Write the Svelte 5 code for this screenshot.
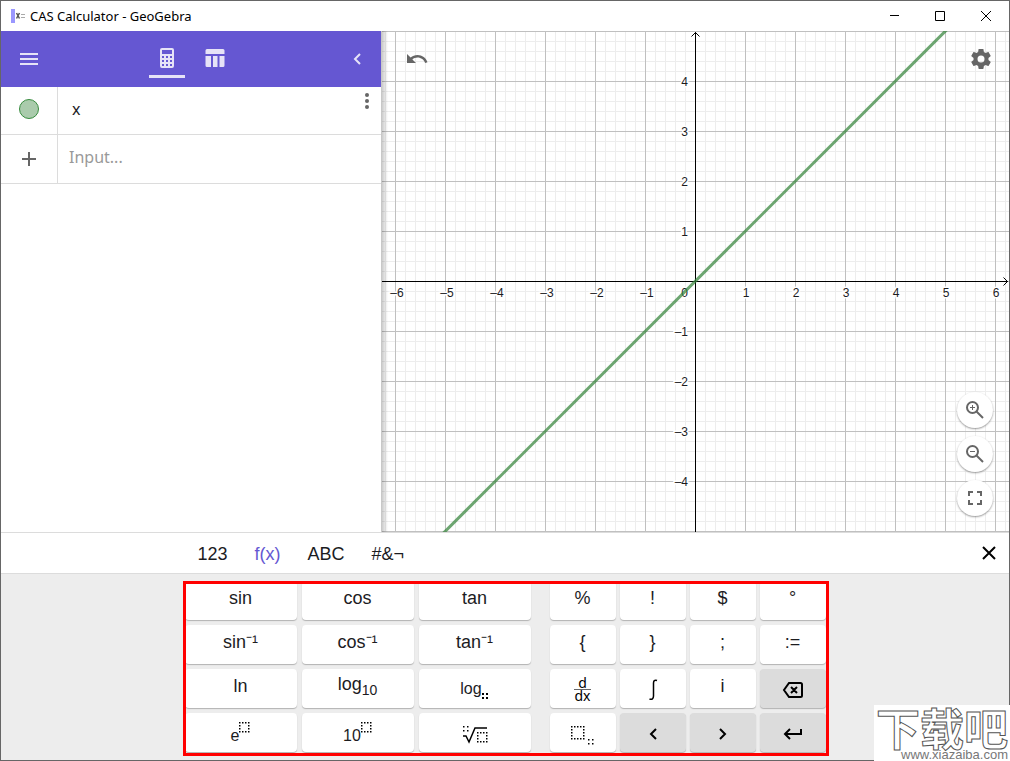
<script>
    import { onMount } from "svelte";

    const UNIT = 50;

    let width = 627;
    let height = 501;
    let expression = "x";
    let draft = "";
    let activeTab = "f(x)";

    const tabs = ["123", "f(x)", "ABC", "#&¬"];

    const functionKeys = [
        { label: "sin" },
        { label: "cos" },
        { label: "tan" },
        { label: "sin", sup: "⁻¹" },
        { label: "cos", sup: "⁻¹" },
        { label: "tan", sup: "⁻¹" },
        { label: "ln" },
        { label: "log", sub: "10" },
        { label: "log", boxSub: true },
        { label: "e", box: true },
        { label: "10", box: true },
        { icon: "root", name: "nth root" },
    ];

    const symbolKeys = [
        { label: "%" },
        { label: "!" },
        { label: "$" },
        { label: "°" },
        { label: "{" },
        { label: "}" },
        { label: ";" },
        { label: ":=" },
        { icon: "derivative", name: "derivative" },
        { icon: "integral", name: "integral" },
        { label: "i" },
        { icon: "backspace", name: "backspace", dark: true },
        { icon: "index", name: "subscript" },
        { icon: "left", name: "left", dark: true },
        { icon: "right", name: "right", dark: true },
        { icon: "enter", name: "enter", dark: true },
    ];

    // perimeter of a dotted placeholder box
    function dots(x, y, cols, rows, step) {
        const out = [];
        for (let r = 0; r < rows; r++) {
            for (let c = 0; c < cols; c++) {
                if (r === 0 || c === 0 || r === rows - 1 || c === cols - 1) {
                    out.push([x + c * step, y + r * step]);
                }
            }
        }
        return out;
    }

    function gridLines(origin, size, step) {
        const out = [];
        const first = Math.ceil(-origin / step);
        for (let i = first; origin + i * step <= size; i++) {
            out.push(origin + i * step + 0.5);
        }
        return out;
    }

    // leaves out the labels that would touch an edge
    function ticks(origin, size) {
        const out = [];
        for (let i = Math.ceil((10 - origin) / UNIT); origin + i * UNIT < size - 10; i++) {
            if (i !== 0) out.push(i);
        }
        return out;
    }

    const tickLabel = (n) => (n < 0 ? "–" + -n : String(n));

    $: cx = Math.floor(width / 2);
    $: cy = Math.floor(height / 2);
    $: reach = Math.max(cx, cy) + UNIT;

    onMount(() => {
        document.title = "CAS Calculator - GeoGebra";
    });
</script>

<div class="window">
    <header class="title-bar">
        <svg class="app-icon" width="16" height="16" viewBox="0 0 16 16">
            <rect x="2" y="1" width="4" height="14" fill="#9a97ff" />
            <path d="M7.500 5l3 5.500M10.500 5l-3 5.500" stroke="#555" stroke-width="1.500" />
            <path d="M12 6.500h4M12 9.500h4" stroke="#aaa" />
        </svg>
        <span class="title">CAS Calculator - GeoGebra</span>
        <div class="window-buttons">
            <button aria-label="Minimize"><svg width="12" height="12" viewBox="0 0 12 12"><path d="M2 5.500h9" /></svg></button>
            <button aria-label="Maximize"><svg width="12" height="12" viewBox="0 0 12 12"><path d="M1.500 1.500h9v9h-9z" /></svg></button>
            <button aria-label="Close"><svg width="12" height="12" viewBox="0 0 12 12"><path d="M1 1l10 10M11 1L1 11" /></svg></button>
        </div>
    </header>

    <main>
        <section class="algebra">
            <div class="toolbar">
                <button class="menu" aria-label="Menu">
                    <svg width="18" height="12" viewBox="0 0 18 12"><path d="M0 0h18v2H0zM0 5h18v2H0zM0 10h18v2H0z" /></svg>
                </button>
                <nav>
                    <button class="view active" aria-label="Algebra">
                        <svg width="20" height="20" viewBox="0 0 20 20"><path fill-rule="evenodd" d="M5 0h10a2 2 0 0 1 2 2v16a2 2 0 0 1-2 2H5a2 2 0 0 1-2-2V2a2 2 0 0 1 2-2zM5 2v4h10V2zM5 8v2h2V8zM9 8v2h2V8zM13 8v2h2V8zM5 12v2h2v-2zM9 12v2h2v-2zM13 12v2h2v-2zM5 16v2h2v-2zM9 16v2h2v-2zM13 16v2h2v-2z" /></svg>
                    </button>
                    <button class="view" aria-label="Table">
                        <svg width="20" height="20" viewBox="0 0 20 20"><path d="M2 1h16a1.500 1.500 0 0 1 1.500 1.500V6H.5V2.500A1.500 1.500 0 0 1 2 1zM.5 8H6v11H2a1.500 1.500 0 0 1-1.500-1.500zM8 8h4.500v11H8zM14.500 8h5v9.500A1.500 1.500 0 0 1 18 19h-3.500z" /></svg>
                    </button>
                </nav>
                <button class="collapse" aria-label="Collapse">
                    <svg width="8" height="12" viewBox="0 0 8 12"><path d="M7 1L2 6l5 5" fill="none" stroke="#e6e3f7" stroke-width="2" /></svg>
                </button>
            </div>

            <div class="row first">
                <div class="marker"><button class="dot" aria-label="Show or hide"></button></div>
                <input aria-label="Expression" class="expression" bind:value={expression} />
                <button class="more" aria-label="More">
                    <svg width="4" height="16" viewBox="0 0 4 16"><circle cx="2" cy="2" r="2" /><circle cx="2" cy="8" r="2" /><circle cx="2" cy="14" r="2" /></svg>
                </button>
            </div>
            <div class="row">
                <div class="marker">
                    <button aria-label="Add"><svg width="14" height="14" viewBox="0 0 14 14"><path d="M6 0h2v6h6v2H8v6H6V8H0V6h6z" /></svg></button>
                </div>
                <input aria-label="Input" placeholder="Input..." bind:value={draft} />
            </div>
        </section>

        <section class="graphics" bind:clientWidth={width} bind:clientHeight={height}>
            <svg class="plot" viewBox="0 0 {width} {height}">
                <g stroke="#ededed">
                    {#each gridLines(cx, width, 10) as x}<path d="M{x} 0V{height}" />{/each}
                    {#each gridLines(cy, height, 10) as y}<path d="M0 {y}H{width}" />{/each}
                </g>
                <g stroke="#c0c0c0">
                    {#each gridLines(cx, width, UNIT) as x}<path d="M{x} 0V{height}" />{/each}
                    {#each gridLines(cy, height, UNIT) as y}<path d="M0 {y}H{width}" />{/each}
                </g>
                <g class="axis">
                    <path d="M{cx + 0.5} 1V{height}M{cx - 3.5} 5.500l4 -4l4 4" />
                    <path d="M0 {cy + 0.5}H{width - 1}M{width - 5.5} {cy - 3.5}l4 4l-4 4" />
                </g>
                <g class="labels">
                    {#each ticks(cx, width + 10) as n}
                        <text x={cx + n * UNIT + (n < 0 ? 2 : 1)} y={cy + 16} text-anchor="middle">{tickLabel(n)}</text>
                    {/each}
                    {#each ticks(cy, height) as n}
                        <text x={cx - 7} y={cy + n * UNIT + 5} text-anchor="end">{tickLabel(-n)}</text>
                    {/each}
                    <text x={cx - 7} y={cy + 16} text-anchor="end">0</text>
                </g>
                <path class="curve" d="M{cx - reach} {cy + 0.5 + reach}L{cx + reach} {cy + 0.5 - reach}" />
            </svg>

            <button class="undo" aria-label="Undo">
                <svg width="24" height="24" viewBox="0 0 24 24"><path d="M12.500 8c-2.650 0-5.050.99-6.900 2.600L2 7v9h9l-3.620-3.620c1.390-1.160 3.160-1.880 5.120-1.880 3.540 0 6.550 2.310 7.600 5.500l2.370-.78C21.080 11.030 17.150 8 12.500 8z" /></svg>
            </button>
            <button class="settings" aria-label="Settings">
                <svg width="24" height="24" viewBox="0 0 24 24"><path fill-rule="evenodd" d="M19.430 12.980c.04-.32.07-.64.07-.98s-.03-.66-.07-.98l2.110-1.650c.19-.15.24-.42.12-.64l-2-3.460c-.12-.22-.39-.3-.61-.22l-2.490 1c-.52-.4-1.080-.73-1.690-.98l-.38-2.650C14.460 2.180 14.250 2 14 2h-4c-.25 0-.46.18-.49.42l-.38 2.650c-.61.25-1.170.59-1.690.98l-2.490-1c-.23-.09-.49 0-.61.22l-2 3.460c-.13.22-.07.49.12.64l2.110 1.650c-.04.32-.07.65-.07.98s.03.66.07.98l-2.110 1.650c-.19.15-.24.42-.12.64l2 3.460c.12.22.39.3.61.22l2.490-1c.52.4 1.080.73 1.690.98l.38 2.650c.03.24.24.42.49.42h4c.25 0 .46-.18.49-.42l.38-2.650c.61-.25 1.170-.59 1.690-.98l2.490 1c.23.09.49 0 .61-.22l2-3.460c.12-.22.07-.49-.12-.64zM12 15.500a3.500 3.500 0 1 1 0-7 3.500 3.500 0 0 1 0 7z" /></svg>
            </button>

            <div class="zoom-buttons">
                <button aria-label="Zoom in">
                    <svg width="20" height="20" viewBox="0 0 20 20"><g fill="none" stroke="#666" stroke-width="2"><circle cx="7.500" cy="7.500" r="5.500" /><path d="M11.500 11.500l6.500 6.500" /><path d="M5 7.500h5M7.500 5v5" stroke-width="1" /></g></svg>
                </button>
                <button aria-label="Zoom out">
                    <svg width="20" height="20" viewBox="0 0 20 20"><g fill="none" stroke="#666" stroke-width="2"><circle cx="7.500" cy="7.500" r="5.500" /><path d="M11.500 11.500l6.500 6.500" /><path d="M5 7.500h5" stroke-width="1" /></g></svg>
                </button>
                <button aria-label="Fullscreen">
                    <svg width="20" height="20" viewBox="0 0 20 20"><path d="M4 8V4h4M12 4h4v4M16 12v4h-4M8 16H4v-4" fill="none" stroke="#666" stroke-width="2" /></svg>
                </button>
            </div>
        </section>
    </main>

    <section class="keyboard">
        <div class="tab-bar">
            <div class="tabs">
                {#each tabs as tab}
                    <button class:selected={tab === activeTab} on:click={() => (activeTab = tab)}>{tab}</button>
                {/each}
            </div>
            <button class="close" aria-label="Close keyboard">
                <svg width="14" height="14" viewBox="0 0 14 14"><path d="M1 1l12 12M13 1L1 13" stroke="#000" stroke-width="2" /></svg>
            </button>
        </div>

        <div class="pad">
            <div class="keys">
                <div class="functions">
                    {#each functionKeys as key}
                        <button class="key" class:low={key.boxSub} class:lower={key.box} class:centered={key.icon} aria-label={key.name}>
                            {#if key.icon}
                                <svg width="26" height="20" viewBox="0 0 26 20">
                                    {#each [...dots(1, 2, 2, 2, 4), ...dots(15, 8, 4, 4, 3)] as [x, y]}
                                        <rect {x} {y} width="1.500" height="1.500" />
                                    {/each}
                                    <path d="M1 12h3l3 6L13 4h12" fill="none" stroke="#000" stroke-width="1.500" />
                                </svg>
                            {:else}
                                <span>{key.label}{#if key.sup}<span class="sup">{key.sup}</span>{/if}{#if key.sub}<sub>{key.sub}</sub>{/if}</span>
                                {#if key.box}
                                    <svg class="exponent" width="11" height="11" viewBox="0 0 11 11">
                                        {#each dots(0, 0, 4, 4, 3) as [x, y]}<rect {x} {y} width="1.500" height="1.500" />{/each}
                                    </svg>
                                {/if}
                                {#if key.boxSub}
                                    <svg class="base" width="7" height="7" viewBox="0 0 7 7">
                                        {#each dots(0, 0, 2, 2, 4) as [x, y]}<rect {x} {y} width="2" height="2" />{/each}
                                    </svg>
                                {/if}
                            {/if}
                        </button>
                    {/each}
                </div>
                <div class="symbols">
                    {#each symbolKeys as key}
                        <button class="key" class:dark={key.dark} class:centered={key.icon} aria-label={key.name}>
                            {#if key.icon === "derivative"}
                                <span class="fraction"><span>d</span><span>dx</span></span>
                            {:else if key.icon === "integral"}
                                <svg width="10" height="22" viewBox="0 0 10 22"><path d="M9 1.500C6.500.5 5.500 2 5.500 4v13c0 2.500-1.500 4-4 3" fill="none" stroke="#000" stroke-width="1.500" /></svg>
                            {:else if key.icon === "backspace"}
                                <svg width="22" height="18" viewBox="0 0 22 18"><path d="M7 2h11.500a1.500 1.500 0 0 1 1.500 1.500v11a1.500 1.500 0 0 1-1.500 1.500H7L2 9zM9 6l6 6M15 6l-6 6" fill="none" stroke="#000" stroke-width="2" /></svg>
                            {:else if key.icon === "index"}
                                <svg width="24" height="22" viewBox="0 0 24 22">
                                    {#each [...dots(0, 3, 5, 5, 3), ...dots(17, 16, 2, 2, 4)] as [x, y]}
                                        <rect {x} {y} width="1.500" height="1.500" />
                                    {/each}
                                </svg>
                            {:else if key.icon === "left"}
                                <svg width="8" height="12" viewBox="0 0 8 12"><path d="M7 1L2 6l5 5" fill="none" stroke="#000" stroke-width="2" /></svg>
                            {:else if key.icon === "right"}
                                <svg width="8" height="12" viewBox="0 0 8 12"><path d="M1 1l5 5-5 5" fill="none" stroke="#000" stroke-width="2" /></svg>
                            {:else if key.icon === "enter"}
                                <svg width="20" height="12" viewBox="0 0 20 12"><path d="M18 1v5H2M7 1L2 6l5 5" fill="none" stroke="#000" stroke-width="2" /></svg>
                            {:else}
                                <span>{key.label}</span>
                            {/if}
                        </button>
                    {/each}
                </div>
                <div class="highlight"></div>
            </div>
        </div>
    </section>

    <div class="watermark">
        <span class="brand">下载吧</span>
        <span class="site">www.xiazaiba.com</span>
    </div>
</div>

<style>
    :global(body) {
        margin: 0;
    }

    .window {
        position: relative;
        display: flex;
        flex-direction: column;
        box-sizing: border-box;
        min-height: 100vh;
        border: 1px solid #666;
        background: #fff;
        color: #1c1c1f;
        font-family: "Liberation Sans", Arial, sans-serif;
    }

    button {
        display: flex;
        align-items: center;
        justify-content: center;
        padding: 0;
        border: 0;
        background: none;
        color: inherit;
        font: inherit;
    }

    svg {
        display: block;
    }

    .title-bar {
        display: flex;
        align-items: center;
        height: 30px;
        padding-left: 8px;
    }

    .title {
        flex: 1;
        margin-left: 5px;
        color: #000;
        font: 13px/16px "Noto Sans", sans-serif;
    }

    .window-buttons {
        display: flex;
    }

    .window-buttons button {
        width: 46px;
        height: 28px;
    }

    .window-buttons path {
        fill: none;
        stroke: #000;
    }

    main {
        display: flex;
        flex: 1;
        min-height: 300px;
    }

    .algebra {
        flex: 0 0 380px;
        border-right: 1px solid #c8c8c8;
    }

    .toolbar {
        display: grid;
        grid-template-columns: 1fr auto 1fr;
        align-items: center;
        height: 56px;
        padding: 0 20px 0 19px;
        background: #6557d2;
        fill: #e6e3f7;
    }

    .menu {
        justify-self: start;
    }

    .collapse {
        justify-self: end;
    }

    nav {
        display: flex;
        gap: 12px;
    }

    .view {
        box-sizing: border-box;
        width: 36px;
        height: 38px;
        border-bottom: 3px solid transparent;
    }

    .view.active {
        border-bottom-color: #e6e3f7;
    }

    .row {
        display: flex;
        height: 48px;
        border-bottom: 1px solid #dcdcdc;
        fill: #666;
    }

    .row.first {
        height: 47px;
    }

    .marker {
        display: flex;
        align-items: center;
        justify-content: center;
        width: 56px;
        border-right: 1px solid #dcdcdc;
    }

    .first .marker {
        align-items: flex-start;
        padding-top: 12px;
        box-sizing: border-box;
        width: 57px;
    }

    .dot {
        box-sizing: border-box;
        width: 20px;
        height: 20px;
        border: 1px solid #388c3f;
        border-radius: 50%;
        background: #aacbac;
    }

    .row input {
        flex: 1;
        min-width: 0;
        padding: 0 11px 4px;
        border: 0;
        outline: 0;
        background: none;
        color: #1c1c1f;
        font: 16px/24px "Noto Sans", sans-serif;
    }

    .row input.expression {
        padding: 0 14px 4px;
    }

    .row input::placeholder {
        color: #999;
    }

    .more {
        align-self: flex-start;
        padding: 6px 12px;
    }

    .graphics {
        position: relative;
        flex: 1;
        min-width: 0;
        overflow: hidden;
    }

    .graphics::before {
        content: "";
        position: absolute;
        z-index: 1;
        inset: 0 auto 0 0;
        width: 6px;
        background: linear-gradient(to right, rgba(0, 0, 0, 0.2), rgba(0, 0, 0, 0));
    }

    .plot {
        position: absolute;
        inset: 0;
        width: 100%;
        height: 100%;
    }

    .axis path {
        fill: none;
        stroke: #000;
    }

    .labels text {
        fill: #1c1c1f;
        stroke: #fff;
        stroke-width: 3px;
        paint-order: stroke;
        font-size: 12px;
    }

    .curve {
        stroke: #35843a;
        stroke-opacity: 0.72;
        stroke-width: 3px;
    }

    .undo,
    .settings {
        position: absolute;
        top: 16px;
        fill: #666;
    }

    .undo {
        left: 23px;
    }

    .settings {
        right: 16px;
    }

    .zoom-buttons {
        position: absolute;
        right: 16px;
        bottom: 16px;
        display: grid;
        gap: 8px;
    }

    .zoom-buttons button {
        width: 36px;
        height: 36px;
        border-radius: 50%;
        background: #fff;
        box-shadow: 0 1px 2px rgba(0, 0, 0, 0.4);
    }

    .keyboard {
        background: #ededed;
    }

    .tab-bar {
        display: grid;
        grid-template-columns: 1fr minmax(0, 641px) 1fr;
        height: 40px;
        border: solid #dcdcdc;
        border-width: 1px 0;
        background: #fff;
    }

    .tabs {
        display: flex;
        gap: 1px;
        grid-column: 2;
    }

    .tabs button {
        padding: 2px 13px 0;
        font-size: 18px;
    }

    .tabs button.selected {
        color: #6557d2;
    }

    .close {
        justify-self: end;
        padding: 0 13px;
    }

    .pad {
        display: flex;
        justify-content: center;
        padding: 7px 0 8px;
    }

    .keys {
        position: relative;
        display: flex;
        gap: 19px;
    }

    .functions,
    .symbols {
        display: grid;
        grid-template-columns: repeat(3, 112px);
        gap: 5px;
    }

    .symbols {
        grid-template-columns: repeat(4, 66px);
        column-gap: 4px;
    }

    .key {
        box-sizing: border-box;
        height: 39px;
        padding-bottom: 6px;
        border-radius: 4px;
        background: #fff;
        box-shadow: 0 1px 1px rgba(0, 0, 0, 0.25);
        font-size: 18px;
        line-height: 20px;
    }

    .key.dark {
        background: #dcdcdc;
    }

    .key.centered {
        padding: 2px 0 0;
    }

    .key.low,
    .key.lower {
        padding: 0;
        font-size: 16px;
    }

    .key.lower {
        padding-top: 6px;
    }

    .key sub {
        font-size: 14px;
        line-height: 1;
    }

    .exponent {
        align-self: flex-start;
        margin-top: 3px;
    }

    .base {
        align-self: flex-end;
        margin-bottom: 8px;
    }

    .fraction {
        display: grid;
        color: #000;
        font: 14px/12px "Noto Sans", sans-serif;
        text-align: center;
    }

    .fraction span:first-child {
        border-bottom: 1px solid #666;
    }

    .highlight {
        position: absolute;
        inset: 0 -3px -4px -2px;
        border: 3px solid #f00;
        pointer-events: none;
    }

    .watermark {
        position: absolute;
        right: -1px;
        bottom: -1px;
        display: grid;
        justify-items: end;
        box-sizing: border-box;
        width: 136px;
        padding-right: 2px;
        background: #fff;
        color: #fff;
    }

    .brand {
        font: bold 44px/44px "Noto Sans CJK SC", sans-serif;
        -webkit-text-stroke: 1px #555;
    }

    .site {
        color: #777;
        font-size: 13px;
        line-height: 12px;
    }
</style>
